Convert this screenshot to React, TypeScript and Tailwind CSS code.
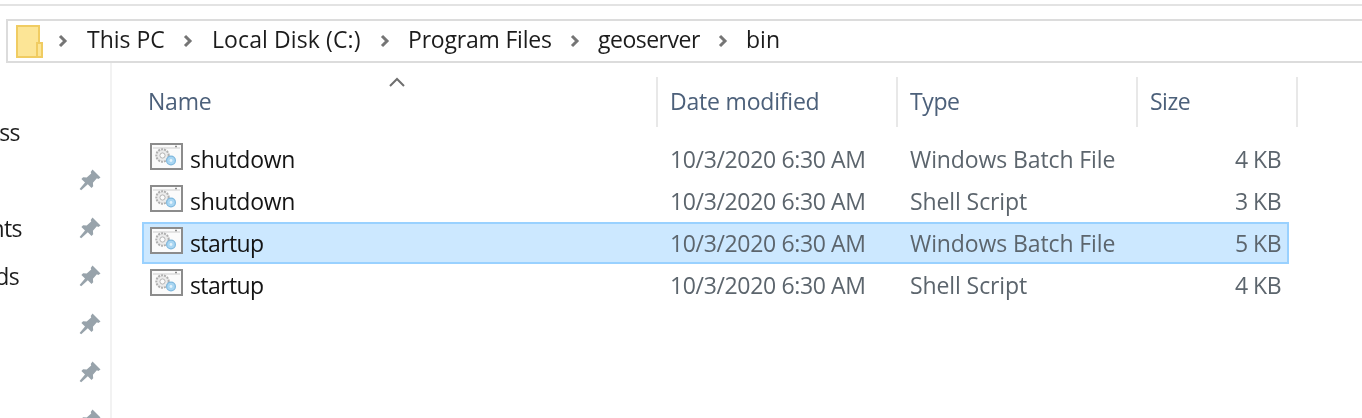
const crumbs = [
  { label: "This PC", width: "w-[76px]", tracking: "tracking-[0px]" },
  { label: "Local Disk (C:)", width: "w-[149px]", tracking: "tracking-[0.1px]" },
  { label: "Program Files", width: "w-[143px]", tracking: "tracking-[-0.2px]" },
  { label: "geoserver", width: "w-[101px]", tracking: "tracking-[-0.5px]" },
  { label: "bin", width: "w-[34px]", tracking: "tracking-[0px]" },
];

const gaps = ["w-[49px]", "w-[47px]", "w-[47px]", "w-[47px]"];

const files = [
  { name: "shutdown", type: "Windows Batch File", size: "4 KB", nameTracking: "tracking-[-0.25px]" },
  { name: "shutdown", type: "Shell Script", size: "3 KB", nameTracking: "tracking-[-0.25px]" },
  { name: "startup", type: "Windows Batch File", size: "5 KB", selected: true, nameTracking: "tracking-[-0.6px]" },
  { name: "startup", type: "Shell Script", size: "4 KB", nameTracking: "tracking-[-0.6px]" },
];

const nav = [
  { text: "Quick access", clip: "w-[20px]" },
  { text: "Desktop", pinned: true, hidden: true, clip: "w-[20px]" },
  { text: "Documents", pinned: true, clip: "w-[22px]" },
  { text: "Downloads", pinned: true, clip: "w-[19px]" },
  { text: "Pictures", pinned: true, hidden: true, clip: "w-[20px]" },
  { text: "Videos", pinned: true, hidden: true, clip: "w-[20px]" },
  { text: "Music", pinned: true, hidden: true, clip: "w-[20px]" },
];

function Chevron() {
  return (
    <svg width="12" height="14" viewBox="0 0 12 14" className="shrink-0">
      <path d="M3 2l5 5-5 5" fill="none" stroke="#757575" strokeWidth="3" />
    </svg>
  );
}

function FolderIcon() {
  return (
    <svg width="27" height="33" viewBox="0 0 27 33" className="shrink-0">
      <path d="M1 1h22v31H1z" fill="#fce596" stroke="#f0cc62" strokeWidth="2" />
      <path d="M21 18h5v14h-5z" fill="#fce596" stroke="#f0cc62" strokeWidth="2" />
    </svg>
  );
}

function Pin() {
  return (
    <svg width="24" height="24" viewBox="0 0 24 24" className="shrink-0">
      <path
        d="M14.5 1.5l8 8-2.2 1.4-1.4-.6-4 4.4.3 3.6-1.7 1.7-3.7-3.7L3.2 22.3l-1.6-1.2 5.4-6.6L3.4 11l1.7-1.8 3.6.4 4.5-4.1-.5-1.6z"
        fill="#98a3ab"
      />
    </svg>
  );
}

function ScriptIcon() {
  return (
    <svg width="33" height="27" viewBox="0 0 33 27" className="shrink-0 -mt-[5px]">
      <rect x="1" y="1" width="31" height="25" fill="#fbfbfb" stroke="#8c8c8c" strokeWidth="2" />
      <path d="M3 5h27" stroke="#dcdcdc" strokeWidth="1.5" />
      <path d="M25 3.5h2" stroke="#8c8c8c" strokeWidth="1.5" />
      <circle cx="12.5" cy="12.5" r="6.2" fill="#ebebeb" stroke="#b0b0b0" strokeWidth="2" strokeDasharray="2 1" />
      <circle cx="12.5" cy="12.5" r="2.6" fill="#fbfbfb" stroke="#b5b5b5" />
      <circle cx="21" cy="17.5" r="4.4" fill="#a9d6f2" stroke="#7fb8de" strokeWidth="1.2" />
      <circle cx="21" cy="17.5" r="1.4" fill="#e4f3fc" />
    </svg>
  );
}

export default function App() {
  return (
    <div className="w-[1362px] h-[418px] overflow-hidden bg-white font-['Open_Sans','Noto_Sans',sans-serif] text-[23px] blur-[0.5px]">
      <div className="h-[19px] pt-1">
        <div className="h-0.5 bg-[#e3e3e3]" />
      </div>

      {/* Address bar */}
      <div className="ml-1.5 h-[44px] flex items-center border-2 border-r-0 border-[#dcdcdc] pl-2">
        <FolderIcon />
        <div className="ml-[14px]"><Chevron /></div>
        <div className="flex items-center ml-[18px] -mt-[3px]">
          {crumbs.map((c, i) => (
            <div key={c.label} className="flex items-center">
              <span className={`${c.width} ${c.tracking} whitespace-nowrap text-[#1c1c1c]`}>{c.label}</span>
              {i < crumbs.length - 1 && (
                <div className={`${gaps[i]} mt-[3px] flex justify-center`}><Chevron /></div>
              )}
            </div>
          ))}
        </div>
      </div>

      <div className="flex h-[356px]">
        {/* Navigation pane */}
        <aside className="w-[112px] shrink-0 border-r-2 border-[#f2f2f2] pt-[45px]">
          {nav.map((item) => (
            <div key={item.text} className="h-12 flex items-center justify-between pr-2">
              <div className={`${item.clip} overflow-hidden flex justify-end`}>
                {!item.hidden && (
                  <span className="whitespace-nowrap shrink-0 text-[#1c1c1c] tracking-[-0.6px]">{item.text}</span>
                )}
              </div>
              {item.pinned && <Pin />}
            </div>
          ))}
        </aside>

        {/* File list */}
        <main className="flex-1 pl-[31px] pt-3.5">
          <div className="relative flex h-[50px] text-[#4c607a]">
            <svg width="18" height="10" viewBox="0 0 18 10" className="absolute left-[245px] top-0">
              <path d="M2 9l7-7 7 7" fill="none" stroke="#6f6f6f" strokeWidth="2" />
            </svg>
            <div className="w-[515px] pl-[5px] pb-[2px] flex items-center border-r-2 border-[#e8e8e8] tracking-[-0.2px]">Name</div>
            <div className="w-[240px] pl-[12px] pb-[2px] flex items-center border-r-2 border-[#e8e8e8] tracking-[-0.2px]">Date modified</div>
            <div className="w-[240px] pl-[12px] pb-[2px] flex items-center border-r-2 border-[#e8e8e8] tracking-[-0.4px]">Type</div>
            <div className="w-[160px] pl-[12px] pb-[2px] flex items-center border-r-2 border-[#e8e8e8] tracking-[-0.5px]">Size</div>
          </div>

          <div className="pt-[11px] w-[1147px] -ml-px">
            {files.map((f, i) => (
              <div
                key={i}
                className={`flex items-center h-[42px] border-2 ${
                  f.selected ? "bg-[#cce8ff] border-[#99d1ff]" : "border-transparent"
                }`}
              >
                <div className="w-[526px] flex items-center pl-[6px] shrink-0">
                  <ScriptIcon />
                  <span className={`ml-[7px] text-[#141414] ${f.nameTracking}`}>{f.name}</span>
                </div>
                <span className="w-[240px] shrink-0 text-[#5c656d] tracking-[-0.35px]">10/3/2020 6:30 AM</span>
                <span className="w-[240px] shrink-0 text-[#5c656d] tracking-[-0.1px]">{f.type}</span>
                <span className="w-[131px] shrink-0 text-right text-[#5c656d] tracking-[-0.5px]">{f.size}</span>
              </div>
            ))}
          </div>
        </main>
      </div>
    </div>
  );
}
